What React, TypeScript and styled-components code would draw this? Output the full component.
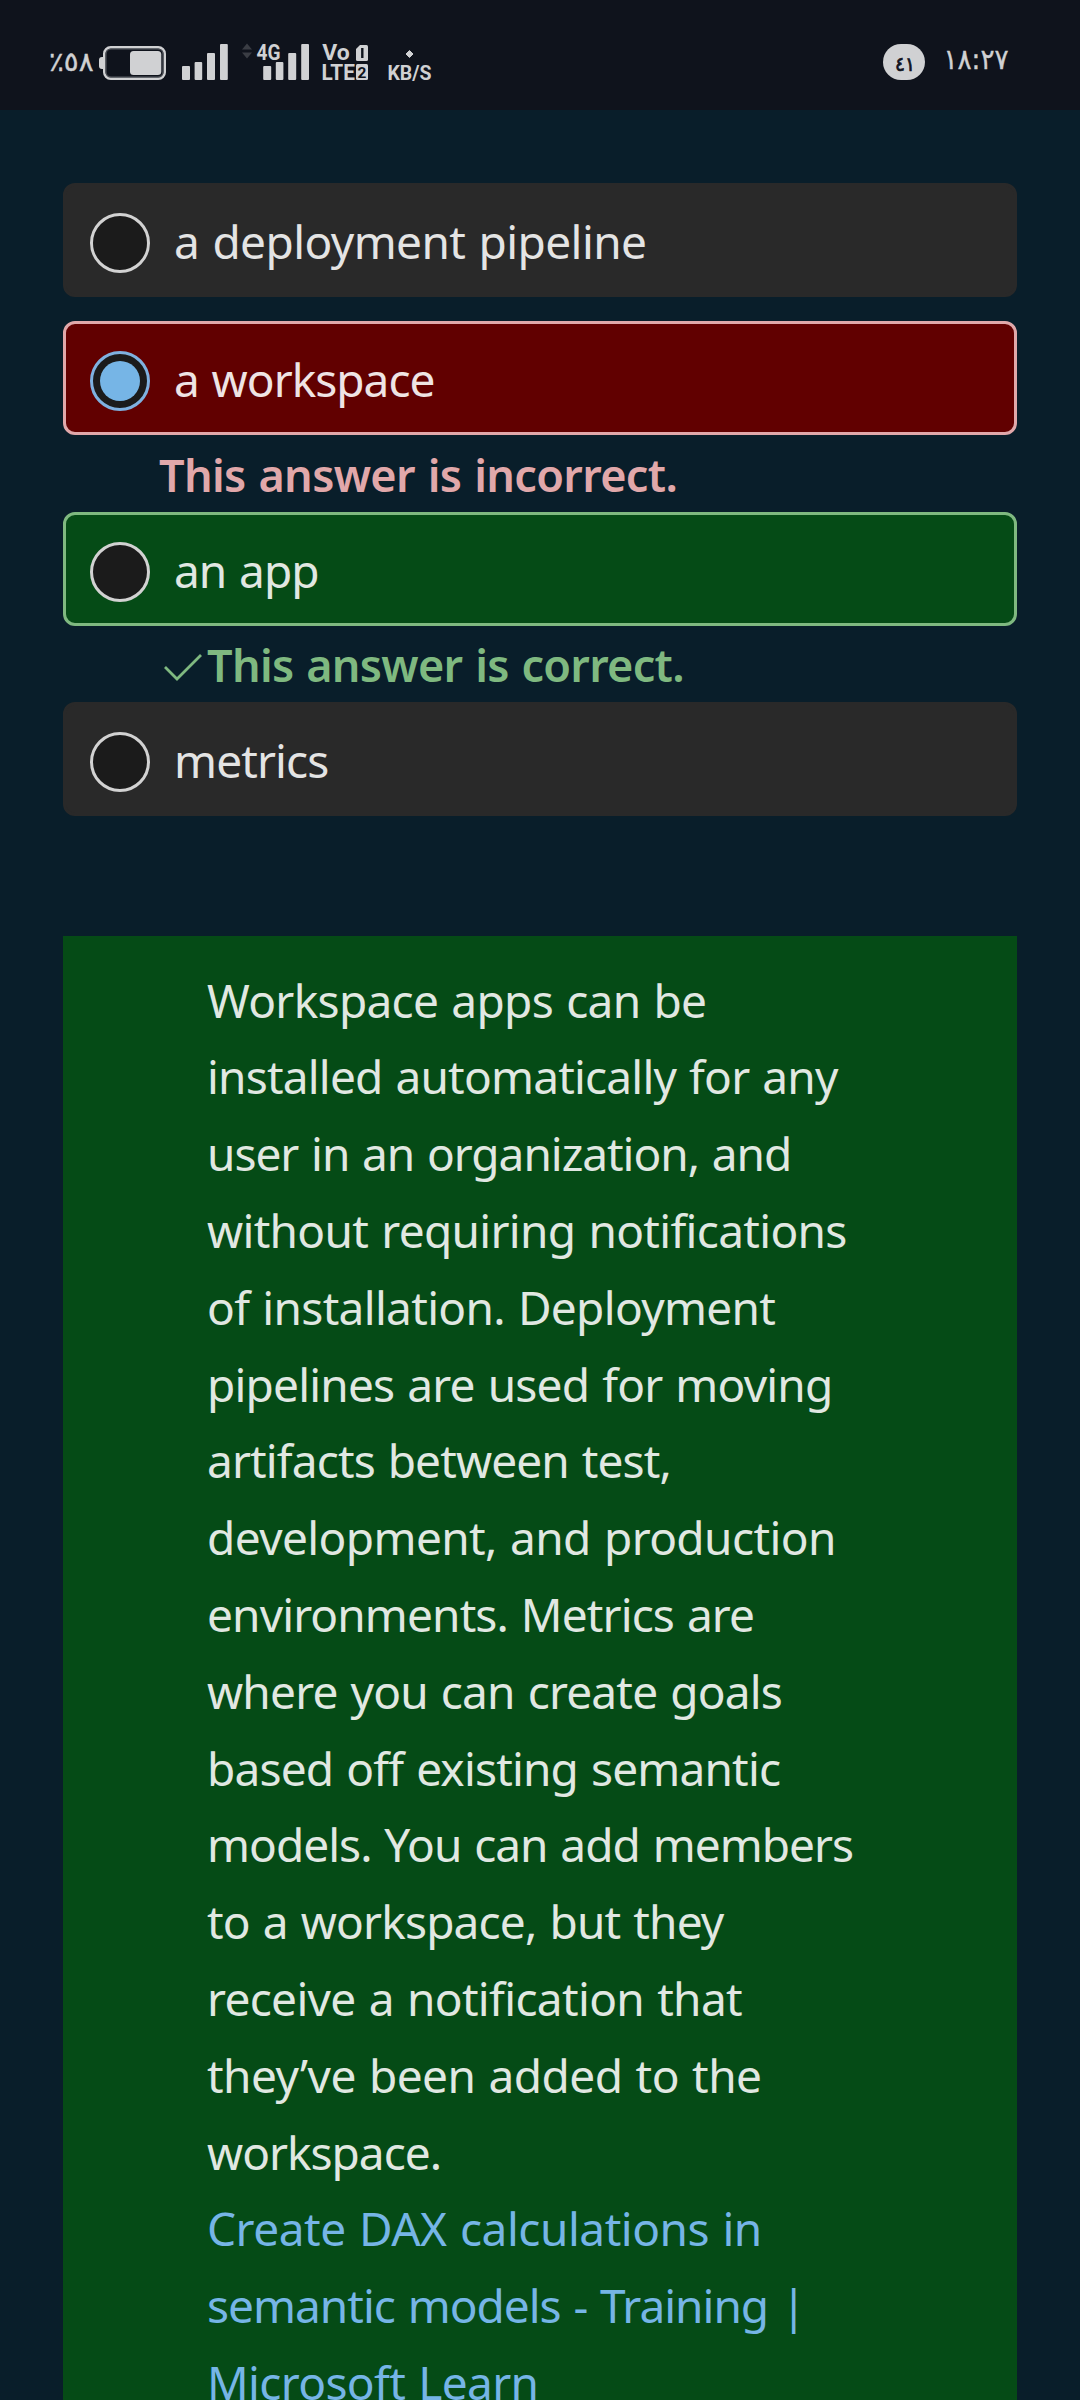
import React from 'react';
import styled, { createGlobalStyle } from 'styled-components';

type Tone = 'plain' | 'wrong' | 'right';

const ink = '#d0d1d3';
const barBg = '#0f131c';

const fills: Record<Tone, string> = { plain: '#292929', wrong: '#610000', right: '#054b16' };
const borders: Record<Tone, string> = { plain: '#292929', wrong: '#e1a8aa', right: '#7fb980' };
const labels: Record<Tone, string> = { plain: '#e4e4e4', wrong: '#efe4e4', right: '#e1e8e2' };

const GlobalStyle = createGlobalStyle`
  * { box-sizing: border-box; }
  body { margin: 0; background: #091e2a; }
`;

const Screen = styled.div`
  width: 1080px;
  height: 2400px;
  overflow: hidden;
  display: flex;
  flex-direction: column;
  background: #091e2a;
  font-family: 'Noto Sans', 'Open Sans', sans-serif;
  font-size: 46px;
  word-spacing: 1.8px;
`;

const StatusBar = styled.header`
  flex: none;
  height: 110px;
  padding: 44px 71px 0 51px;
  display: flex;
  justify-content: space-between;
  align-items: flex-start;
  background: ${barBg};
  color: ${ink};
`;

const StatusGroup = styled.div`
  display: flex;
  align-items: flex-start;
`;

const Glyph = styled.svg<{ $gap?: number }>`
  display: block;
  flex: none;
  margin-left: ${p => p.$gap ?? 0}px;
  overflow: visible;
`;

const Badge = styled.div`
  width: 42px;
  height: 36px;
  border-radius: 18px;
  background: ${ink};
`;

const Page = styled.main`
  flex: 1;
  display: flex;
  flex-direction: column;
  padding: 73px 63px 0;
`;

const Option = styled.label<{ $tone: Tone; $after?: number }>`
  flex: none;
  height: 114px;
  margin-bottom: ${p => p.$after ?? 0}px;
  padding-left: 24px;
  display: flex;
  align-items: center;
  gap: 24px;
  border: 3px solid ${p => borders[p.$tone]};
  border-radius: 12px;
  background: ${p => fills[p.$tone]};
  color: ${p => labels[p.$tone]};
`;

const Radio = styled.span<{ $on?: boolean }>`
  flex: none;
  width: 60px;
  height: 60px;
  margin-top: 6px;
  display: grid;
  place-items: center;
  border: 3px solid ${p => (p.$on ? '#7fb1e0' : '#d2d2d2')};
  border-radius: 50%;
  background: #1b1b1b;
`;

const RadioDot = styled.span`
  width: 40px;
  height: 40px;
  border-radius: 50%;
  background: #76b5e6;
`;

const Label = styled.span<{ $track: number }>`
  padding-top: 2px;
  line-height: 64px;
  letter-spacing: ${p => p.$track}px;
  white-space: nowrap;
`;

const Feedback = styled.div<{ $color: string; $height: number }>`
  flex: none;
  height: ${p => p.$height}px;
  padding: 2px 0 0 96px;
  display: flex;
  align-items: center;
  color: ${p => p.$color};
  font-size: 45px;
  font-weight: 600;
  line-height: 76px;
  white-space: nowrap;
`;

const FeedbackText = styled.span<{ $track: number }>`
  letter-spacing: ${p => p.$track}px;
`;

const Explanation = styled.section`
  flex: 1;
  margin-top: 120px;
  padding: 25.6px 0 0 144px;
  background: #054b16;
  color: #e1e8e2;
`;

const Paragraph = styled.p`
  margin: 0;
  line-height: 76.8px;
`;

const Link = styled.a`
  display: block;
  color: #76b5e6;
  line-height: 76.8px;
  text-decoration: none;
`;

const Line = styled.span<{ $track: number }>`
  display: block;
  letter-spacing: ${p => p.$track}px;
  white-space: nowrap;
`;

const body: [string, number][] = [
  ['Workspace apps can be', -0.68],
  ['installed automatically for any', -0.8],
  ['user in an organization, and', -1.02],
  ['without requiring notifications', -0.68],
  ['of installation. Deployment', -0.68],
  ['pipelines are used for moving', -0.8],
  ['artifacts between test,', -0.87],
  ['development, and production', -0.59],
  ['environments. Metrics are', -0.87],
  ['where you can create goals', -0.8],
  ['based off existing semantic', -0.82],
  ['models. You can add members', -0.97],
  ['to a workspace, but they', -0.82],
  ['receive a notification that', -0.66],
  ['they’ve been added to the', -0.56],
  ['workspace.', -1],
];

const link: [string, number][] = [
  ['Create DAX calculations in', -0.46],
  ['semantic models - Training |', -0.99],
  ['Microsoft Learn', -0.64],
];

const arabic = { fontFamily: "'DejaVu Sans', sans-serif", direction: 'ltr', unicodeBidi: 'bidi-override' } as const;

const Bars = ({ x = 0 }: { x?: number }) => (
  <g fill={ink}>
    <rect x={x} y="22" width="8" height="14" rx="1" />
    <rect x={x + 12.6} y="18" width="7.6" height="18" rx="1" />
    <rect x={x + 25} y="9" width="8" height="27" rx="1" />
    <rect x={x + 38} y="0" width="7.8" height="36" rx="1" />
  </g>
);

const BatteryPercent = () => (
  <Glyph width="48" height="36">
    <text {...arabic} x="-2" y="27" fontSize="27" fill={ink} stroke={ink} strokeWidth="0.4" textLength="44.5" lengthAdjust="spacingAndGlyphs">٪٥٨</text>
  </Glyph>
);

const Battery = () => (
  <Glyph width="67" height="36">
    <path d="M4 13H3a3 3 0 0 0-3 3v6a3 3 0 0 0 3 3h1z" fill={ink} />
    <rect x="5.2" y="3.2" width="60.6" height="31.6" rx="6.5" fill="none" stroke={ink} strokeWidth="2.4" />
    <rect x="7" y="5" width="57" height="28" rx="5" fill="none" stroke="#5b5e64" strokeWidth="1" />
    <rect x="31" y="7" width="31.3" height="24" rx="3.5" fill={ink} />
  </Glyph>
);

const Signal = () => (
  <Glyph width="46" height="36" $gap={16}>
    <Bars />
  </Glyph>
);

const MobileSignal = () => (
  <Glyph width="67" height="36" $gap={14}>
    <path d="M0 5.5 5-.5l5 6zM0 8.5h10l-5 6z" fill="#3a3d44" />
    <text x="14.6" y="15.6" fontFamily="Roboto, sans-serif" fontWeight="700" fontSize="22.5" fill={ink} textLength="24" lengthAdjust="spacingAndGlyphs">4G</text>
    <Bars x={21.2} />
  </Glyph>
);

const VoLte = () => (
  <Glyph width="46" height="36" $gap={13}>
    <g fontFamily="Roboto, sans-serif" fontWeight="700" fill={ink}>
      <text x="0.3" y="16" fontSize="21.5" textLength="27.5" lengthAdjust="spacingAndGlyphs">Vo</text>
      <text x="-0.6" y="36" fontSize="22" textLength="33.5" lengthAdjust="spacingAndGlyphs">LTE</text>
    </g>
    <path d="M38 1h6.5a1.5 1.5 0 0 1 1.5 1.5v13a1.5 1.5 0 0 1-1.5 1.5h-9a1.5 1.5 0 0 1-1.5-1.5V5z" fill={ink} />
    <rect x="34" y="20" width="12" height="16" rx="1.5" fill={ink} />
    <path d="M40.3 4v10" stroke={barBg} strokeWidth="2.4" />
    <text x="40" y="33.6" textAnchor="middle" fontFamily="Roboto, sans-serif" fontWeight="700" fontSize="15.5" fill={barBg}>2</text>
  </Glyph>
);

const Speed = () => (
  <Glyph width="43" height="36" $gap={20}>
    <path d="M21.5 6.5 25 10l-3.5 3.5L18 10z" fill={ink} stroke={ink} strokeWidth="1" strokeLinejoin="round" />
    <text x="-0.5" y="35.6" fontFamily="Roboto, sans-serif" fontWeight="700" fontSize="19.5" fill={ink} textLength="44" lengthAdjust="spacingAndGlyphs">KB/S</text>
  </Glyph>
);

const Clock = () => (
  <Glyph width="64" height="36" $gap={20}>
    <text {...arabic} x="-1.5" y="25" fontSize="28" fill={ink} stroke={ink} strokeWidth="0.4" textLength="65" lengthAdjust="spacingAndGlyphs">١٨:٢٧</text>
  </Glyph>
);

export default function App() {
  return (
    <Screen>
      <GlobalStyle />
      <StatusBar>
        <StatusGroup>
          <BatteryPercent />
          <Battery />
          <Signal />
          <MobileSignal />
          <VoLte />
          <Speed />
        </StatusGroup>
        <StatusGroup>
          <Badge>
            <Glyph width="42" height="36">
              <text {...arabic} x="12" y="27" fontSize="20" fill={barBg} stroke={barBg} strokeWidth="0.7" textLength="20" lengthAdjust="spacingAndGlyphs">٤١</text>
            </Glyph>
          </Badge>
          <Clock />
        </StatusGroup>
      </StatusBar>
      <Page>
        <Option $tone="plain" $after={24}>
          <Radio />
          <Label $track={-0.58}>a deployment pipeline</Label>
        </Option>
        <Option $tone="wrong">
          <Radio $on><RadioDot /></Radio>
          <Label $track={-0.98}>a workspace</Label>
        </Option>
        <Feedback $color="#e1a8aa" $height={77}>
          <FeedbackText $track={-0.66}>This answer is incorrect.</FeedbackText>
        </Feedback>
        <Option $tone="right">
          <Radio />
          <Label $track={-0.98}>an app</Label>
        </Option>
        <Feedback $color="#7fb980" $height={76}>
          <Glyph width="48" height="48" viewBox="0 0 48 48">
            <path d="M6 26 18 38 42 14" fill="none" stroke="#7fb980" strokeWidth="2.8" />
          </Glyph>
          <FeedbackText $track={-0.71}>This answer is correct.</FeedbackText>
        </Feedback>
        <Option $tone="plain">
          <Radio />
          <Label $track={-0.88}>metrics</Label>
        </Option>
        <Explanation>
          <Paragraph>
            {body.map(([text, track]) => (
              <Line key={text} $track={track}>{text} </Line>
            ))}
          </Paragraph>
          <Link>
            {link.map(([text, track]) => (
              <Line key={text} $track={track}>{text} </Line>
            ))}
          </Link>
        </Explanation>
      </Page>
    </Screen>
  );
}
